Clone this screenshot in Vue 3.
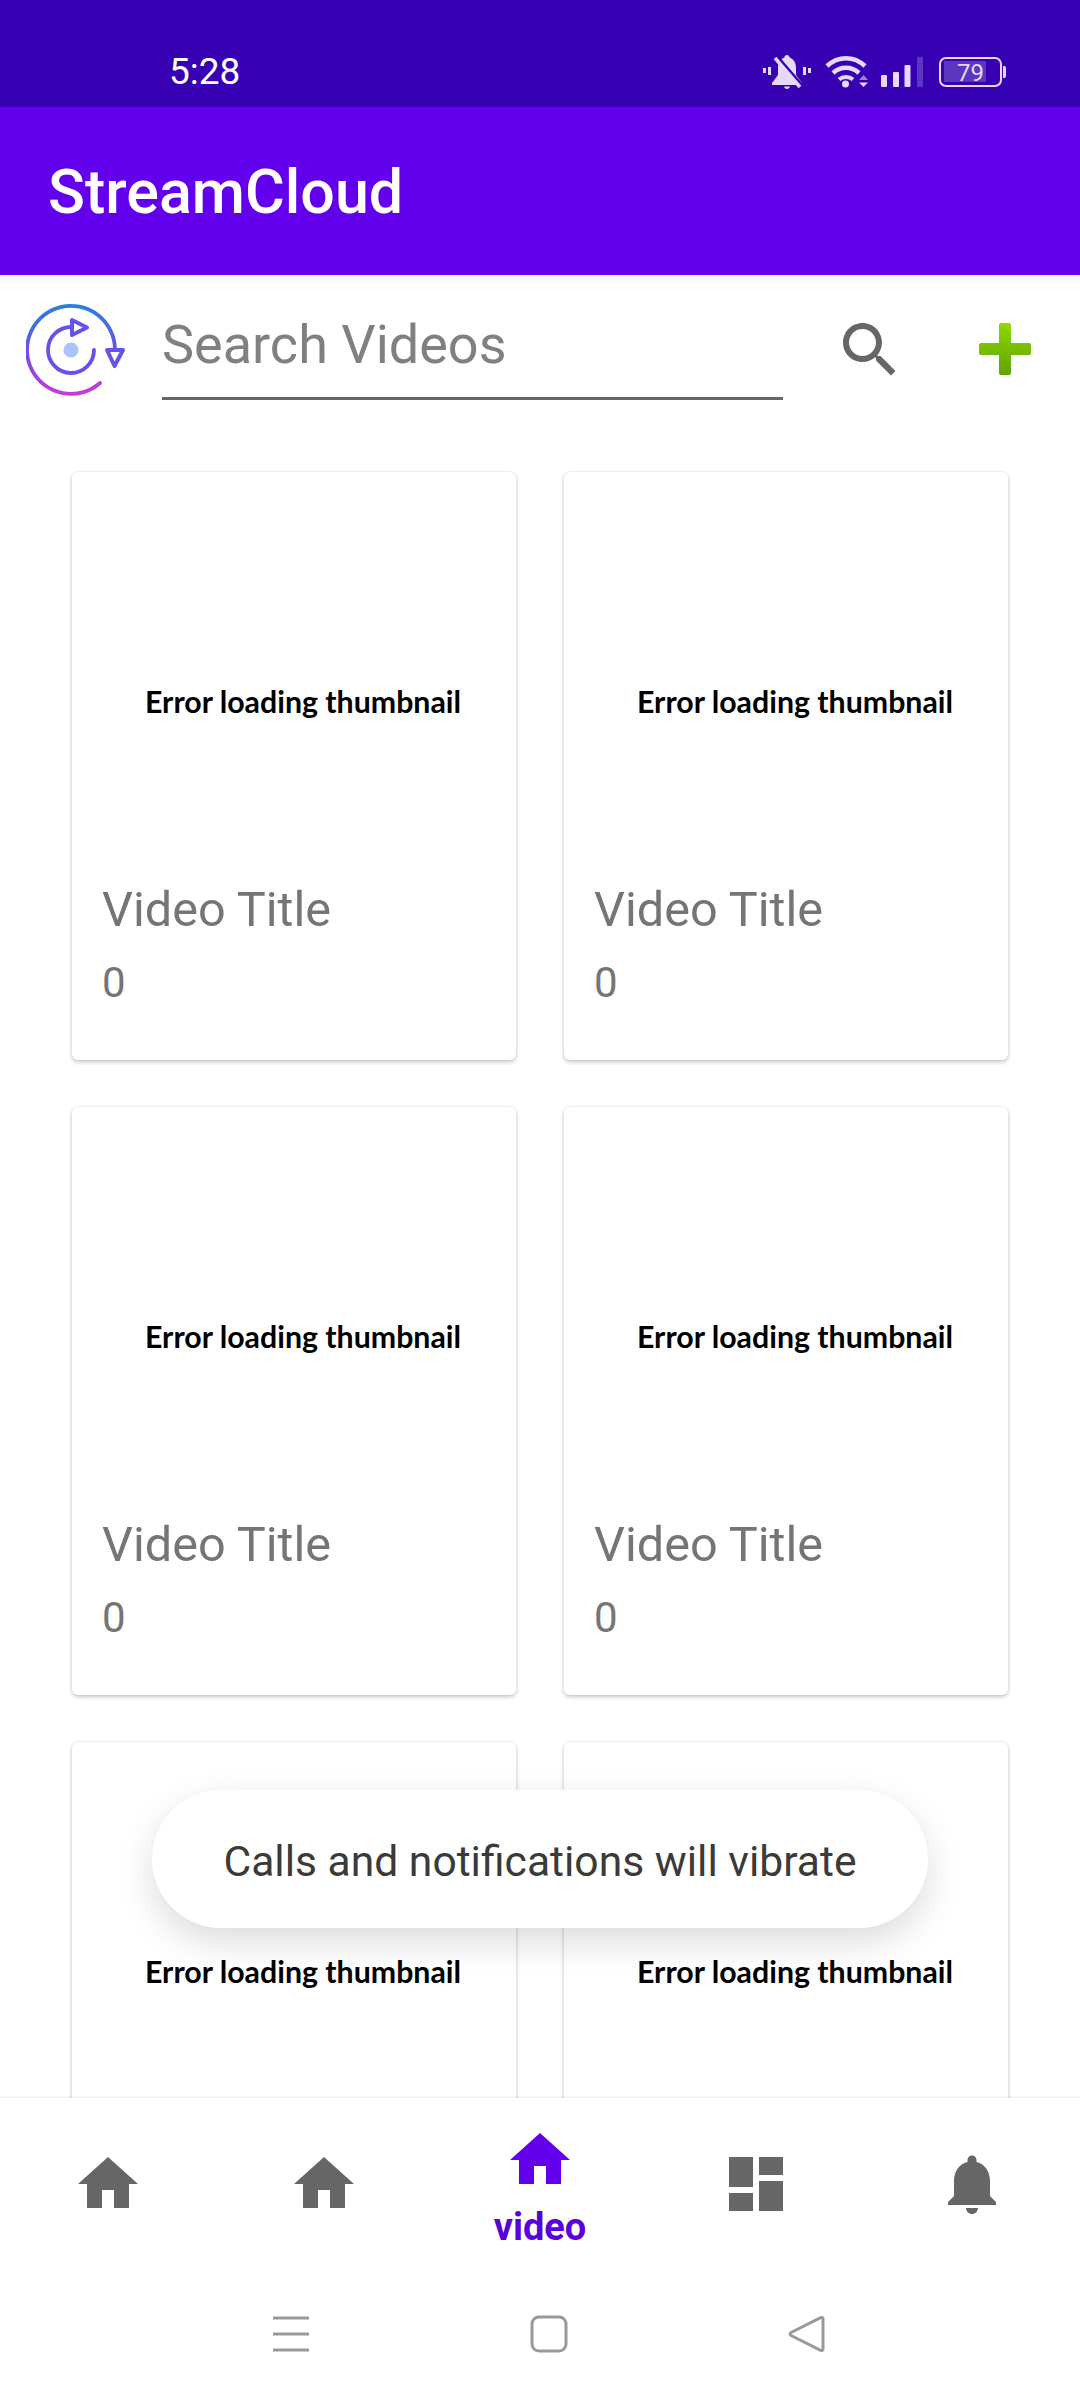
<template>
  <div class="screen">
    <div class="statusbar">
      <span class="time">5:28</span>
      <div class="status-icons">
        <svg class="ic-bell" width="48" height="36" viewBox="0 0 48 36">
          <path d="M24 1c1.500 0 2.600 1 2.600 2.400C31 5 33 9 33 14v7l6 8v2H9v-2l6-8v-7c0-5 2-9 6.400-10.600C21.400 2 22.500 1 24 1z" fill="#e4d9f7"/>
          <path d="M21 32.500h6c-.4 1.500-1.500 2.500-3 2.500s-2.600-1-3-2.500z" fill="#e4d9f7"/>
          <path d="M15 4l25 29" stroke="#3700b3" stroke-width="3.500"/>
          <path d="M12 4l25 29" stroke="#e4d9f7" stroke-width="3.500"/>
          <path d="M0 14h3v5H0zM5 13h3v8H5zM40 13h3v8h-3zM45 14h3v5h-3z" fill="#e4d9f7"/>
        </svg>
        <svg class="ic-wifi" width="44" height="36" viewBox="0 0 44 36">
          <path d="M2 12c11-10.500 27-10.500 38 0" fill="none" stroke="#e4d9f7" stroke-width="4.500"/>
          <path d="M8 19c7.500-7 18.500-7 26 0" fill="none" stroke="#e4d9f7" stroke-width="4.500"/>
          <path d="M14 25.500c4-3.500 10-3.500 14 0" fill="none" stroke="#e4d9f7" stroke-width="4"/>
          <circle cx="20.500" cy="30" r="3.500" fill="#e4d9f7"/>
          <path d="M34 26l4.500-5 4.500 5z" fill="#9b80df"/>
          <path d="M34 28.500h9L38.500 33z" fill="#e4d9f7"/>
        </svg>
        <svg class="ic-signal" width="44" height="36" viewBox="0 0 44 36">
          <rect x="1" y="21" width="6" height="12" rx="1" fill="#e4d9f7"/>
          <rect x="13" y="18" width="6" height="15" rx="1" fill="#e4d9f7"/>
          <rect x="24.500" y="11" width="6" height="22" rx="1" fill="#e4d9f7"/>
          <rect x="37" y="3" width="6" height="30" rx="1" fill="#5b36c0"/>
        </svg>
        <div class="battery">
          <div class="battery-body"><span class="battery-fill"></span><span class="battery-num">79</span></div>
          <span class="battery-tip"></span>
        </div>
      </div>
    </div>

    <div class="appbar">StreamCloud</div>

    <div class="search-row">
      <svg class="logo" width="100" height="100" viewBox="0 0 100 100">
        <defs>
          <linearGradient id="logoGrad" gradientUnits="userSpaceOnUse" x1="45" y1="6" x2="45" y2="94">
            <stop offset="0" stop-color="#2a7fe0" />
            <stop offset="0.5" stop-color="#6a4fe8" />
            <stop offset="1" stop-color="#c83ad6" />
          </linearGradient>
        </defs>
        <path d="M89 50A44 44 0 1 0 74 83" fill="none" stroke="url(#logoGrad)" stroke-width="3.800" stroke-linecap="round" />
        <path d="M46 27A23 23 0 1 0 68 50" fill="none" stroke="#6a4fe8" stroke-width="3.800" stroke-linecap="round" />
        <path d="M46 20L61 27.500 46 35z" fill="#fff" stroke="#6553ea" stroke-width="4" stroke-linejoin="round" />
        <path d="M81 50H97L88.500 66z" fill="#fff" stroke="#6553ea" stroke-width="4" stroke-linejoin="round" />
        <circle cx="45" cy="50" r="7.500" fill="#a9c4fa" />
      </svg>
      <input class="search-input" type="text" placeholder="Search Videos" />
      <svg class="search-ic" width="72" height="72" viewBox="0 0 24 24">
        <path fill="#666" d="M15.500 14h-.79l-.28-.27C15.410 12.590 16 11.110 16 9.500 16 5.910 13.090 3 9.500 3S3 5.910 3 9.500 5.910 16 9.500 16c1.610 0 3.090-.59 4.230-1.570l.27.28v.79l5 4.990L20.490 19l-4.990-5zm-6 0C7.010 14 5 11.990 5 9.500S7.010 5 9.500 5 14 7.010 14 9.500 11.990 14 9.500 14z" />
      </svg>
      <svg class="plus-ic" width="54" height="54" viewBox="0 0 54 54">
        <defs>
          <linearGradient id="plusGrad" x1="0" y1="0" x2="0" y2="1">
            <stop offset="0" stop-color="#90d800" />
            <stop offset="1" stop-color="#5fa300" />
          </linearGradient>
        </defs>
        <path fill="url(#plusGrad)" d="M23 1h8a2 2 0 0 1 2 2v18h18a2 2 0 0 1 2 2v8a2 2 0 0 1-2 2H33v18a2 2 0 0 1-2 2h-8a2 2 0 0 1-2-2V33H3a2 2 0 0 1-2-2v-8a2 2 0 0 1 2-2h18V3a2 2 0 0 1 2-2z" />
      </svg>
    </div>

    <div class="grid-wrap">
      <div class="grid">
        <div v-for="n in 6" :key="n" class="card">
          <div class="thumb">Error loading thumbnail</div>
          <div class="card-title">Video Title</div>
          <div class="card-count">0</div>
        </div>
      </div>
    </div>

    <div class="toast">Calls and notifications will vibrate</div>

    <div class="bottom-nav">
      <div v-for="item in navItems" :key="item.id" class="nav-item" :class="{ active: item.label }">
        <svg width="72" height="72" viewBox="0 0 24 24">
          <path :d="item.path" />
        </svg>
        <span v-if="item.label" class="nav-label">{{ item.label }}</span>
      </div>
    </div>

    <div class="sys-nav">
      <svg width="38" height="38" viewBox="0 0 38 38">
        <path d="M1 3h36M1 19h36M1 35h36" stroke="#999" stroke-width="3" fill="none" />
      </svg>
      <svg width="38" height="38" viewBox="0 0 38 38">
        <rect x="2" y="2" width="34" height="34" rx="7" stroke="#999" stroke-width="3" fill="none" />
      </svg>
      <svg width="38" height="38" viewBox="0 0 38 38">
        <path d="M35 4v30a1.500 1.500 0 0 1-2.300 1.300L3 20.500a1.700 1.700 0 0 1 0-3L32.700 2.700A1.500 1.500 0 0 1 35 4z" stroke="#999" stroke-width="3" fill="none" stroke-linejoin="round" />
      </svg>
    </div>
  </div>
</template>

<script setup>
const homePath = "M10 20v-6h4v6h5v-8h3L12 3 2 12h3v8z"

const navItems = [
  { id: 1, path: homePath },
  { id: 2, path: homePath },
  { id: 3, path: homePath, label: "video" },
  { id: 4, path: "M3 13h8V3H3v10zm0 8h8v-6H3v6zm10 0h8V11h-8v10zm0-18v6h8V3h-8z" },
  { id: 5, path: "M12 22c1.100 0 2-.9 2-2h-4c0 1.100.89 2 2 2zm6-6v-5c0-3.070-1.640-5.640-4.500-6.320V4c0-.83-.67-1.500-1.500-1.500s-1.500.67-1.500 1.500v.68C7.630 5.360 6 7.920 6 11v5l-2 2v1h16v-1l-2-2z" },
]
</script>

<style scoped>
.screen {
  position: relative;
  display: flex;
  flex-direction: column;
  width: 1080px;
  height: 2400px;
  overflow: hidden;
  background: #fff;
  font-family: Roboto, sans-serif;
}

.statusbar {
  flex: none;
  height: 107px;
  display: flex;
  align-items: center;
  justify-content: space-between;
  padding: 36px 74px 0 169px;
  background: #3700b3;
  color: #fff;
  box-sizing: border-box;
}

.time {
  font-size: 37px;
  font-weight: 400;
}

.status-icons {
  display: flex;
  align-items: center;
}

.ic-wifi {
  margin-left: 14px;
}

.ic-signal {
  margin-left: 11px;
}

.battery {
  display: flex;
  align-items: center;
  margin-left: 15px;
}

.battery-body {
  position: relative;
  width: 63px;
  height: 30px;
  border: 2.500px solid #e4d9f7;
  border-radius: 7px;
  box-sizing: border-box;
}

.battery-fill {
  position: absolute;
  left: 2.500px;
  top: 2.500px;
  bottom: 2.500px;
  width: 42px;
  background: #5b36c0;
}

.battery-num {
  position: absolute;
  left: 0;
  right: 0;
  top: -1px;
  text-align: center;
  font-size: 24px;
  line-height: 30px;
  color: #e4d9f7;
}

.battery-tip {
  width: 3px;
  height: 12px;
  margin-left: 1px;
  background: #e4d9f7;
  border-radius: 0 2px 2px 0;
}

.appbar {
  flex: none;
  height: 168px;
  display: flex;
  align-items: center;
  padding: 2px 0 0 48px;
  box-sizing: border-box;
  background: #6200ee;
  color: #fff;
  font-size: 61px;
  font-weight: 500;
}

.search-row {
  flex: none;
  height: 140px;
  display: flex;
  align-items: flex-start;
  box-sizing: border-box;
  padding-left: 26px;
  box-shadow: inset 0 10px 10px -8px rgba(0, 0, 0, 0.1);
}

.logo {
  margin-top: 25px;
  flex: none;
}

.search-input {
  flex: none;
  width: 621px;
  height: 125px;
  margin-left: 36px;
  padding: 16px 0 0;
  border: none;
  border-bottom: 3px solid #666;
  outline: none;
  box-sizing: border-box;
  background: transparent;
  font-family: Roboto, sans-serif;
  font-size: 54px;
}

.search-input::placeholder {
  color: #808080;
  opacity: 1;
}

.search-ic {
  flex: none;
  margin: 39px 0 0 51px;
}

.plus-ic {
  flex: none;
  margin: 47px 0 0 72px;
}

.grid-wrap {
  flex: 1;
  min-height: 0;
  overflow: hidden;
  padding: 57px 0 0 72px;
}

.grid {
  display: grid;
  grid-template-columns: 444px 444px;
  gap: 47px 48px;
}

.card {
  height: 588px;
  box-sizing: border-box;
  background: #fff;
  border-radius: 6px;
  box-shadow: 0 2px 4px rgba(0, 0, 0, 0.22), 0 0 3px rgba(0, 0, 0, 0.08);
  padding: 0 30px;
}

.thumb {
  height: 410px;
  box-sizing: border-box;
  padding: 209px 0 0 43px;
  font-family: Lato, sans-serif;
  font-size: 30.300px;
  line-height: 40px;
  font-weight: 700;
  color: #000;
  white-space: nowrap;
}

.card-title {
  font-size: 48.600px;
  line-height: 56px;
  color: #757575;
}

.card-count {
  margin-top: 21px;
  font-size: 42px;
  line-height: 48px;
  color: #757575;
}

.toast {
  position: absolute;
  left: 152px;
  top: 1790px;
  width: 776px;
  height: 138px;
  padding-top: 3px;
  box-sizing: border-box;
  display: flex;
  align-items: center;
  justify-content: center;
  background: #fff;
  border-radius: 69px;
  box-shadow: 0 14px 36px rgba(0, 0, 0, 0.14);
  color: #3a3a3a;
  font-size: 42.600px;
  font-weight: 400;
}

.bottom-nav {
  flex: none;
  height: 172px;
  display: grid;
  grid-template-columns: repeat(5, 216px);
  background: #fff;
  box-shadow: 0 -1px 2px rgba(0, 0, 0, 0.08);
  position: relative;
}

.nav-item {
  display: flex;
  flex-direction: column;
  align-items: center;
  padding-top: 50px;
  fill: #666;
}

.nav-item.active {
  padding-top: 26px;
  fill: #6200ee;
}

.nav-label {
  margin-top: 11px;
  font-size: 38px;
  line-height: 40px;
  font-weight: 700;
  color: #5a00dc;
}

.sys-nav {
  flex: none;
  height: 130px;
  display: grid;
  grid-template-columns: 38px 38px 38px;
  gap: 220px;
  padding: 45px 0 0 272px;
  box-sizing: border-box;
  background: #fff;
}
</style>
